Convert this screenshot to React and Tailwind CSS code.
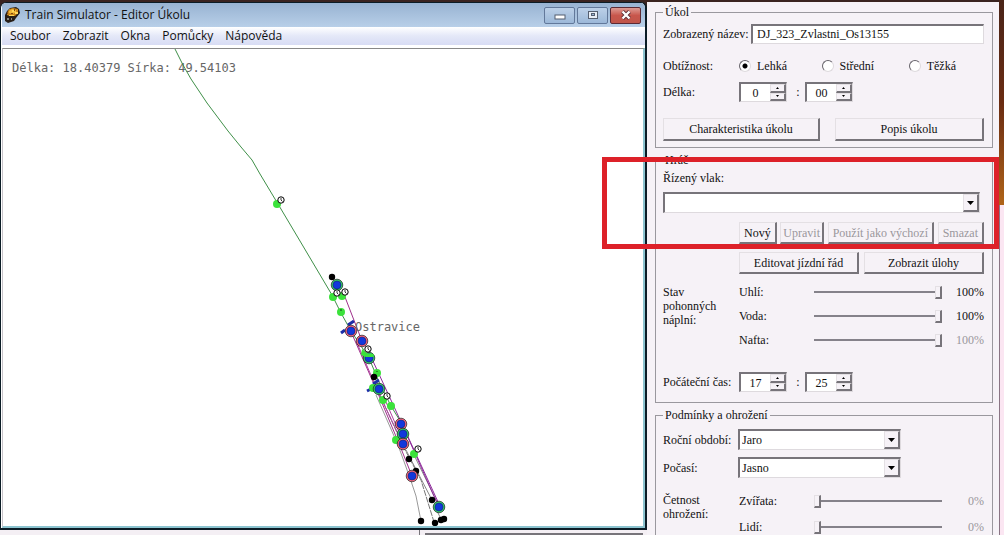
// src/App.jsx
import { useState } from 'react';

const stations = [
  { x: 337, y: 285, ring: '#2fc468' },
  { x: 351, y: 331, ring: '#f0607a' },
  { x: 362, y: 341, ring: '#f0607a' },
  { x: 369, y: 358, ring: '#2fc468' },
  { x: 379, y: 389, ring: '#2fc468' },
  { x: 401, y: 424, ring: '#f0607a' },
  { x: 403, y: 434, ring: '#2fc468' },
  { x: 403, y: 444, ring: '#f0607a' },
  { x: 412, y: 476, ring: '#f0607a' },
  { x: 439, y: 507, ring: '#2fc468' },
];

const greenDots = [
  [277, 204], [333, 297], [342, 296], [341, 312], [377, 373],
  [373, 388], [383, 400], [391, 406], [396, 440], [414, 454],
];

const blackDots = [
  [332, 277], [374, 377], [409, 459], [416, 471], [432, 500],
  [421, 521], [435, 523], [441, 520], [444, 519],
];

const clocks = [[281, 200], [337, 293], [345, 292], [368, 349], [387, 396], [418, 449]];

function TrackMap() {
  return (
    <svg viewBox="3 49 638 477" className="block h-[477px] w-[638px] shrink-0" fill="none">
      <text x="12" y="72" fontSize="12" fill="#666" className="font-['DejaVu_Sans_Mono',monospace]">
        Délka: 18.40379 Sírka: 49.54103
      </text>
      <path d="M376 395 398 445 410 478 416 496 421 521" stroke="#999" />
      <path d="M380 395 403 446 421 480 434 522" stroke="#777" strokeDasharray="6 1" />
      <path d="M406 450 432 500M414 455 440 508M436 509 441 519" stroke="#888" />
      <path d="M345 297 362 341M352 334 377 391 400 446 412 476" stroke="#a0308c" />
      <path d="M357 343 380 396 403 444M386 402 405 446" stroke="#b040a0" />
      <path d="M366 346 402 424 437 503M403 426 439 504" stroke="#8d2a9a" />
      <path d="M174 47 183 65 191 79 207 103 228 131 241 147 252 160 260 174 278 204 300 241 332 295 341 313 351 331 369 358 379 382 391 406 402 424" stroke="#3f8f48" />
      <path d="M341 333 345 330M348 325 354 321M367 391 371 389M373 384 379 380" stroke="#1c2ea8" strokeWidth="3" />
      {greenDots.map(([x, y]) => (
        <circle key={`${x}-${y}`} cx={x} cy={y} r="4" fill="#3be23b" />
      ))}
      {blackDots.map(([x, y]) => (
        <circle key={`${x}-${y}`} cx={x} cy={y} r="3.2" fill="#000" />
      ))}
      {stations.map((s) => (
        <g key={`${s.x}-${s.y}`}>
          <circle cx={s.x} cy={s.y} r="5.8" fill={s.ring} stroke="#222" strokeWidth=".7" />
          <circle cx={s.x} cy={s.y} r="4" fill="#1238dc" stroke="#102060" strokeWidth=".5" />
        </g>
      ))}
      <path d="M362 349 368 354 374 354 373 357 366 357 361 355Z" fill="#3be23b" />
      <path d="M340 310h2M377 371v1" stroke="#143c14" />
      {clocks.map(([x, y]) => (
        <g key={`${x}-${y}`} stroke="#000">
          <circle cx={x} cy={y} r="3.2" fill="#fff" />
          <path d={`M${x} ${y - 2}v2l1.5 1.5`} strokeWidth=".8" />
        </g>
      ))}
      <text x="355" y="331" fontSize="12" fill="#666" className="font-['DejaVu_Sans_Mono',monospace]">
        Ostravice
      </text>
    </svg>
  );
}

function EditorIcon() {
  return (
    <svg viewBox="0 0 16 16" className="size-4">
      <path d="M1 8 3 4 6 1 12 0 15 2 16 6 12 11 10 14 4 16 1 14Z" fill="#282018" />
      <path d="M3 6 5 2 9 1 14 2 14 6 11 9 6 9 3 8Z" fill="#c98418" />
      <path d="M5 4 8 2 12 3 12 5 9 7 5 6Z" fill="#f0b838" />
      <path d="M8 3h2v2H8zM11 5h3v2h-3zM5 8h5v1H5z" fill="#ffd95a" />
      <path d="M3 5h1v2H3zM10 2h1v2h-1zM7 6h2v1H7z" fill="#7a4a10" />
      <path d="M3 11h2v2H3zM7 11h1v2H7z" fill="#8a8a84" />
    </svg>
  );
}

function CaptionButton({ label, close, children }) {
  return (
    <button
      type="button"
      aria-label={label}
      className={`flex h-[17px] w-[31px] items-center justify-center rounded-xs border ${
        close
          ? 'border-[#5c2a34] bg-linear-to-b from-[#dc9a94] via-[#c8564c] to-[#c0564a]'
          : 'border-[#62789a] bg-linear-to-b from-[#bcd0e8] to-[#9cb8d8]'
      }`}
    >
      <svg viewBox="0 0 12 10" className="h-[10px] w-3" fill="none">
        {children}
      </svg>
    </button>
  );
}

function EditorWindow() {
  return (
    <section className="flex min-h-0 flex-1 flex-col overflow-hidden rounded-t-md border-t border-r-2 border-b-2 border-l border-[#0b1c26] bg-white pl-px">
      <header className="flex h-6 shrink-0 items-center gap-[5px] bg-linear-to-b from-[#98b3d2] to-[#b8cfe8] pr-1 pl-[2px]">
        <EditorIcon />
        <h1 className="flex-1 text-[12px]">Train Simulator - Editor Úkolu</h1>
        <div className="flex gap-[2px]">
          <CaptionButton label="Minimalizovat">
            <rect x="1" y="5" width="10" height="4" fill="#fff" stroke="#555f70" />
          </CaptionButton>
          <CaptionButton label="Maximalizovat">
            <rect x="1.5" y="1.5" width="9" height="7" fill="#e8eef6" stroke="#555f70" />
            <rect x="4.5" y="3.5" width="3" height="2" fill="#9cb8d8" stroke="#555f70" />
          </CaptionButton>
          <CaptionButton label="Zavřít" close>
            <path d="M2.5 1.5l7 7m0-7l-7 7" stroke="#5a3038" strokeWidth="4" />
            <path d="M2.5 1.5l7 7m0-7l-7 7" stroke="#fff" strokeWidth="2.4" />
          </CaptionButton>
        </div>
      </header>
      <nav className="flex h-[18px] shrink-0 items-center gap-3 bg-linear-to-b from-white via-[#e4e8f8] to-[#d8dcf4] px-2 text-[12px]">
        {['Soubor', 'Zobrazit', 'Okna', 'Pomůcky', 'Nápověda'].map((item) => (
          <a key={item} href="#">{item}</a>
        ))}
      </nav>
      <div className="mt-[3px] flex min-h-0 flex-1 overflow-hidden border-t border-r-2 border-b-2 border-l border-t-[#888] border-r-[#8cc4d0] border-b-[#8cc4d0] border-l-[#c8c4ca]">
        <TrackMap />
      </div>
    </section>
  );
}

const raised = 'border border-t-[#e4e0e4] border-l-[#e4e0e4] border-r-2 border-b-2 border-r-[#77747a] border-b-[#77747a]';
const sunken = 'border-t-2 border-l-2 border-r border-b border-t-[#77747a] border-l-[#77747a] border-r-[#dedade] border-b-[#dedade] bg-white';

function Button({ className, ...props }) {
  return (
    <button
      type="button"
      className={`flex items-center justify-center whitespace-nowrap bg-[#f6f2f7] disabled:text-[#9a979c] ${raised} ${className}`}
      {...props}
    />
  );
}

function Group({ title, className, children }) {
  return (
    <fieldset className={`min-w-0 border border-[#9a989e] pr-2 pl-[7px] ${className}`}>
      <legend className="h-4 px-[2px] leading-4">{title}</legend>
      {children}
    </fieldset>
  );
}

function Select({ label, options, className }) {
  return (
    <div className={`relative h-[21px] ${sunken} ${className}`}>
      <select aria-label={label} className="block h-full w-full appearance-none pr-5 pl-[2px] outline-none">
        {options.map((option) => <option key={option}>{option}</option>)}
      </select>
      <span className={`pointer-events-none absolute inset-y-0 right-0 flex w-4 items-center justify-center bg-[#f6f2f7] ${raised}`}>
        <svg viewBox="0 0 7 4" className="h-1 w-[7px]"><path d="M0 0h7L3.5 4z" /></svg>
      </span>
    </div>
  );
}

function Spinner({ label, initial }) {
  const [value, setValue] = useState(initial);
  const step = (by) => setValue(String(Math.max(0, Number(value) + by)).padStart(initial.length, '0'));

  return (
    <div className={`flex h-5 w-12 ${sunken}`}>
      <input
        aria-label={label}
        value={value}
        onChange={(e) => setValue(e.target.value)}
        className="w-0 flex-1 text-center outline-none"
      />
      <div className="flex w-4 flex-col">
        <Button className="min-h-0 flex-1" aria-label={`${label} více`} onClick={() => step(1)}>
          <svg viewBox="0 0 3 2" className="h-[2px] w-[3px]"><path d="M0 2h3L1.5 0z" /></svg>
        </Button>
        <Button className="min-h-0 flex-1" aria-label={`${label} méně`} onClick={() => step(-1)}>
          <svg viewBox="0 0 3 2" className="h-[2px] w-[3px]"><path d="M0 0h3L1.5 2z" /></svg>
        </Button>
      </div>
    </div>
  );
}

function TimeFields({ label, hours, minutes }) {
  return (
    <div className="flex h-5 items-center">
      <span className="w-[76px] whitespace-nowrap">{label}:</span>
      <Spinner label={`${label} hodiny`} initial={hours} />
      <span className="w-[18px] pl-1 text-center">:</span>
      <Spinner label={`${label} minuty`} initial={minutes} />
    </div>
  );
}

function Slider({ label, initial, dim, className }) {
  const [value, setValue] = useState(initial);

  return (
    <label className={`flex items-center ${className}`}>
      <span className="w-[75px]">{label}:</span>
      <input
        type="range"
        min="0"
        max="100"
        value={value}
        onChange={(e) => setValue(e.target.value)}
        className="h-[14px] w-0 flex-1 appearance-none bg-transparent [&::-webkit-slider-runnable-track]:h-[2px] [&::-webkit-slider-runnable-track]:bg-[#85828a] [&::-webkit-slider-thumb]:-mt-[5px] [&::-webkit-slider-thumb]:h-[13px] [&::-webkit-slider-thumb]:w-[7px] [&::-webkit-slider-thumb]:appearance-none [&::-webkit-slider-thumb]:border [&::-webkit-slider-thumb]:border-t-[#e4e0e4] [&::-webkit-slider-thumb]:border-r-2 [&::-webkit-slider-thumb]:border-b-2 [&::-webkit-slider-thumb]:border-l-[#e4e0e4] [&::-webkit-slider-thumb]:border-r-[#77747a] [&::-webkit-slider-thumb]:border-b-[#77747a] [&::-webkit-slider-thumb]:bg-[#f6f2f7]"
      />
      <span className={`w-[42px] text-right ${dim ? 'text-[#9a979c]' : ''}`}>{value}%</span>
    </label>
  );
}

function TaskPanel() {
  const [name, setName] = useState('DJ_323_Zvlastni_Os13155');
  const [difficulty, setDifficulty] = useState('Lehká');

  return (
    <form className="min-h-full bg-[#f6f2f7] pt-[2px] pr-[6px] pl-2 font-['Liberation_Serif',serif] text-[12px]">
      <Group title="Úkol" className="pb-[6px]">
        <label className="mt-1 flex h-5 items-center">
          <span className="w-[88px] whitespace-nowrap">Zobrazený název:</span>
          <input
            value={name}
            onChange={(e) => setName(e.target.value)}
            className={`h-5 w-0 flex-1 px-1 outline-none ${sunken}`}
          />
        </label>
        <div className="mt-[14px] flex h-4 items-center">
          <span className="w-[76px]">Obtížnost:</span>
          <div className="flex flex-1 justify-between pr-7">
            {['Lehká', 'Střední', 'Těžká'].map((level) => (
              <label key={level} className="flex items-center gap-[6px]">
                <input
                  type="radio"
                  name="difficulty"
                  checked={difficulty === level}
                  onChange={() => setDifficulty(level)}
                  className="size-3 appearance-none rounded-full border border-t-[#66636a] border-r-[#dedade] border-b-[#dedade] border-l-[#66636a] bg-white checked:bg-[radial-gradient(circle,#000_2px,#fff_3px)]"
                />
                {level}
              </label>
            ))}
          </div>
        </div>
        <div className="mt-2">
          <TimeFields label="Délka" hours="0" minutes="00" />
        </div>
        <div className="mt-4 flex gap-[15px]">
          <Button className="h-[23px] flex-1">Charakteristika úkolu</Button>
          <Button className="h-[23px] w-[149px]">Popis úkolu</Button>
        </div>
      </Group>

      <Group title="Hráč" className="mt-1 pb-[10px]">
        <p className="leading-5">Řízený vlak:</p>
        <Select label="Řízený vlak" options={['']} className="mt-1 mr-1" />
        <div className="mt-[9px] ml-[76px] flex justify-between">
          <Button className="h-[22px] px-1">Nový</Button>
          <Button className="h-[22px] px-[2px]" disabled>Upravit</Button>
          <Button className="h-[22px] px-1" disabled>Použít jako výchozí</Button>
          <Button className="h-[22px] px-1" disabled>Smazat</Button>
        </div>
        <div className="mt-2 ml-[76px] flex gap-[5px]">
          <Button className="h-[22px] flex-1">Editovat jízdní řád</Button>
          <Button className="h-[22px] flex-1">Zobrazit úlohy</Button>
        </div>
        <div className="mt-[6px] flex">
          <p className="w-[76px] pt-[5px] leading-[14px]">Stav<br />pohonných<br />náplní:</p>
          <div className="flex-1">
            <Slider label="Uhlí" initial={100} className="h-6" />
            <Slider label="Voda" initial={100} className="h-6" />
            <Slider label="Nafta" initial={100} dim className="h-6" />
          </div>
        </div>
        <div className="mt-5">
          <TimeFields label="Počáteční čas" hours="17" minutes="25" />
        </div>
      </Group>

      <Group title="Podmínky a ohrožení" className="mt-1 pb-2">
        <div className="mt-[6px] flex items-center">
          <span className="w-[75px] whitespace-nowrap">Roční období:</span>
          <Select label="Roční období" options={['Jaro', 'Léto', 'Podzim', 'Zima']} className="w-[163px]" />
        </div>
        <div className="mt-[7px] flex items-center">
          <span className="w-[75px]">Počasí:</span>
          <Select label="Počasí" options={['Jasno', 'Déšť', 'Sníh']} className="w-[163px]" />
        </div>
        <div className="mt-[10px] flex">
          <p className="w-[76px] pt-[5px] leading-[14px]">Četnost<br />ohrožení:</p>
          <div className="flex-1">
            <Slider label="Zvířata" initial={0} dim className="h-[26px]" />
            <Slider label="Lidí" initial={0} dim className="h-[26px]" />
          </div>
        </div>
      </Group>
    </form>
  );
}

export default function App() {
  return (
    <div className="flex h-screen overflow-hidden bg-[#3a2320] text-[#111]">
      <main className="flex min-w-0 flex-1 flex-col pt-[2px] font-['Open_Sans',sans-serif]">
        <EditorWindow />
        <div className="flex h-[5px] shrink-0 gap-[5px] bg-[#f4eff4]">
          <div className="w-[420px] border-r border-[#77747a]" />
          <div className="mr-1 flex-1 border-b-2 border-[#77747a]" />
        </div>
      </main>
      <aside className="relative w-[352px] shrink-0 pt-[2px]">
        <TaskPanel />
        <div className="pointer-events-none absolute top-[157px] right-0 -left-[45px] h-[92px] border-5 border-[#dd2129]" />
      </aside>
      <div className="flex w-[5px] shrink-0 flex-col">
        <div className="h-[205px] bg-linear-to-b from-[#4a2418] via-[#6a2c12] to-[#b06418]" />
        <div className="flex-1 border-l border-[#8a7484] bg-[#fbe6f2]" />
      </div>
    </div>
  );
}
